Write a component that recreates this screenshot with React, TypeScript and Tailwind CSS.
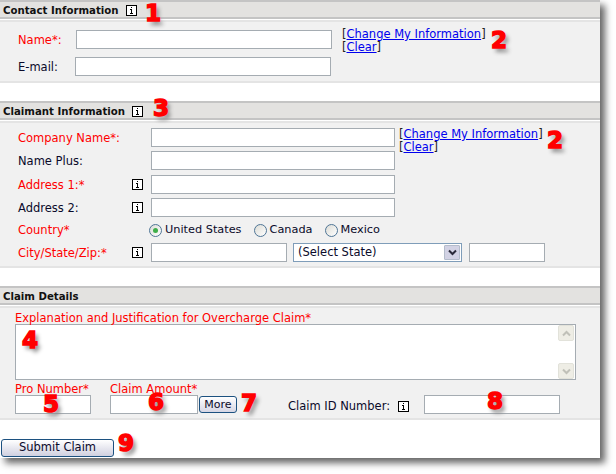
import type { ReactNode } from "react";

function InfoIcon({ className = "" }: { className?: string }) {
  return (
    <svg width="11" height="11" viewBox="0 0 11 11" className={`shrink-0 ${className}`}>
      <rect x="0.5" y="0.5" width="10" height="10" fill="#fff" stroke="#000" />
      <path d="M5 2h1v1H5zM4 4h2v4h1v1H4V8h1V5H4z" fill="#000" />
    </svg>
  );
}

function Marker({ n, className }: { n: string; className: string }) {
  return (
    <span
      className={`absolute font-['DejaVu_Sans'] text-[23px] leading-none font-bold text-[#f00] [-webkit-text-stroke:1.5px_#f00] [text-shadow:3px_4px_4px_#8a8a8a] ${className}`}
    >
      {n}
    </span>
  );
}

function SectionHeader({ children }: { children: ReactNode }) {
  return (
    <div className="flex h-[19px] items-center gap-[7px] border-y-2 border-[#c4c4c4] bg-[#e3e2e0] pt-[2px] pl-[3px] text-[10.2px] font-bold text-[#111]">
      {children}
    </div>
  );
}

function TextBox({ className = "" }: { className?: string }) {
  return <div className={`h-[19px] shrink-0 border border-[#a5acb2] bg-white ${className}`} />;
}

function ChangeLinks() {
  return (
    <div className="text-[11.5px] leading-[13px] text-[#222]">
      <div>
        [<a className="text-[#00e] underline">Change My Information</a>]
      </div>
      <div>
        [<a className="text-[#00e] underline">Clear</a>]
      </div>
    </div>
  );
}

function Radio({ label, checked = false }: { label: string; checked?: boolean }) {
  return (
    <div className="flex items-center gap-[3px]">
      <div className="flex h-[13px] w-[13px] items-center justify-center rounded-full border border-[#4f7596] bg-gradient-to-br from-[#dcdcd6] to-white">
        {checked && <div className="h-[5px] w-[5px] rounded-full bg-[#3fae49]" />}
      </div>
      <span>{label}</span>
    </div>
  );
}

function ClaimantRow({
  label,
  required = false,
  info = false,
  children,
  className = "",
}: {
  label: string;
  required?: boolean;
  info?: boolean;
  children?: ReactNode;
  className?: string;
}) {
  return (
    <div className={`flex items-center ${className}`}>
      <div className={`w-[132px] shrink-0 pt-[2px] pl-[18px] whitespace-nowrap ${required ? "text-[#f00]" : ""}`}>
        {label}
      </div>
      <div className="w-[19px] shrink-0">{info && <InfoIcon />}</div>
      {children}
    </div>
  );
}

function ScrollButton({ up = false }: { up?: boolean }) {
  return (
    <div className="flex h-[16px] w-[16px] items-center justify-center rounded-[2px] border border-[#e2e2da] bg-[#eeede5]">
      <svg width="9" height="7" viewBox="0 0 9 7">
        <path
          d={up ? "M1 5.5l3.5-3.5 3.5 3.5" : "M1 1.5l3.5 3.5 3.5-3.5"}
          fill="none"
          stroke="#c0c0b8"
          strokeWidth="2"
        />
      </svg>
    </div>
  );
}

export default function App() {
  return (
    <div className="relative h-[474px] w-[616px] overflow-hidden bg-white font-['DejaVu_Sans',sans-serif] text-[11.5px] text-[#0a0a2a]">
      <div className="h-[458px] w-[600px] bg-white shadow-[5px_5px_7px_#666]">
        <SectionHeader>
          <span>Contact Information</span>
          <InfoIcon />
        </SectionHeader>
        <div className="mt-[1px] flex h-[63px] border-y-2 border-[#e4e4e4] bg-[#f1f1f1]">
          <div className="pt-[8px]">
            <div className="flex items-center">
              <div className="w-[76px] pt-[2px] pl-[18px] text-[#f00]">Name*:</div>
              <TextBox className="w-[256px]" />
            </div>
            <div className="mt-[8px] flex items-center">
              <div className="w-[75px] pt-[2px] pl-[18px]">E-mail:</div>
              <TextBox className="w-[256px]" />
            </div>
          </div>
          <div className="pt-[6px] pl-[10px]">
            <ChangeLinks />
          </div>
        </div>

        <div className="mt-[18px]">
          <SectionHeader>
            <span>Claimant Information</span>
            <InfoIcon />
          </SectionHeader>
        </div>
        <div className="mt-[1px] h-[147px] border-y-2 border-[#e4e4e4] bg-[#f1f1f1] pt-[5px]">
          <ClaimantRow label="Company Name*:" required className="relative">
            <TextBox className="w-[244px]" />
            <div className="absolute top-[0px] left-[399px]">
              <ChangeLinks />
            </div>
          </ClaimantRow>
          <ClaimantRow label="Name Plus:" className="mt-[4px]">
            <TextBox className="w-[244px]" />
          </ClaimantRow>
          <ClaimantRow label="Address 1:*" required info className="mt-[4px]">
            <TextBox className="w-[244px]" />
          </ClaimantRow>
          <ClaimantRow label="Address 2:" info className="mt-[4px]">
            <TextBox className="w-[244px]" />
          </ClaimantRow>
          <ClaimantRow label="Country*" required className="mt-[2px] h-[22px]">
            <div className="-ml-[2px] flex gap-[12px] text-[11.3px]">
              <Radio label="United States" checked />
              <Radio label="Canada" />
              <Radio label="Mexico" />
            </div>
          </ClaimantRow>
          <ClaimantRow label="City/State/Zip:*" required info className="mt-[2px]">
            <TextBox className="w-[136px]" />
            <div className="ml-[6px] flex h-[19px] w-[169px] items-center justify-between border border-[#7f9db9] bg-white pr-[1px] pl-[4px]">
              <span>(Select State)</span>
              <div className="flex h-[15px] w-[16px] items-center justify-center rounded-[1px] border border-[#b4bccb] bg-[#d2d2e4]">
                <svg width="9" height="7" viewBox="0 0 9 7">
                  <path d="M1 1.5l3.5 3.5 3.5-3.5" fill="none" stroke="#2a2a3a" strokeWidth="2" />
                </svg>
              </div>
            </div>
            <TextBox className="ml-[7px] w-[76px]" />
          </ClaimantRow>
        </div>

        <div className="mt-[18px]">
          <SectionHeader>
            <span>Claim Details</span>
          </SectionHeader>
        </div>
        <div className="mt-[1px] h-[114px] border-y-2 border-[#e4e4e4] bg-[#f1f1f1] pt-[4px] pl-[15px]">
          <div className="leading-[12px] text-[#f00]">Explanation and Justification for Overcharge Claim*</div>
          <div className="flex h-[56px] w-[561px] justify-end border border-[#a5acb2] bg-white">
            <div className="flex w-[17px] flex-col justify-between">
              <ScrollButton up />
              <ScrollButton />
            </div>
          </div>
          <div className="mt-[3px] flex">
            <div className="w-[95px]">
              <div className="leading-[12px] text-[#f00]">Pro Number*</div>
              <TextBox className="w-[76px]" />
            </div>
            <div className="w-[88px]">
              <div className="leading-[12px] text-[#f00]">Claim Amount*</div>
              <TextBox className="w-[88px]" />
            </div>
            <button className="mt-[13px] ml-[1px] h-[17px] w-[38px] rounded-[3px] border border-[#1c5180] bg-gradient-to-b from-white to-[#d6d6e4] text-[11px] leading-none">
              More
            </button>
            <div className="mt-[14px] ml-[51px] flex h-[19px] items-center gap-[8px]">
              <span>Claim ID Number:</span>
              <InfoIcon />
            </div>
            <TextBox className="mt-[12px] ml-[15px] w-[136px]" />
          </div>
        </div>

        <button className="mt-[19px] ml-[1px] h-[18px] w-[113px] rounded-[3px] border border-[#1c5180] bg-gradient-to-b from-white to-[#d0d0e0] text-[11.5px] leading-none">
          Submit Claim
        </button>
      </div>

      <Marker n="1" className="top-[2px] left-[145px]" />
      <Marker n="2" className="top-[29px] left-[491px]" />
      <Marker n="3" className="top-[97px] left-[153px]" />
      <Marker n="2" className="top-[129px] left-[547px]" />
      <Marker n="4" className="top-[329px] left-[22px]" />
      <Marker n="5" className="top-[393px] left-[43px]" />
      <Marker n="6" className="top-[391px] left-[148px]" />
      <Marker n="7" className="top-[392px] left-[241px]" />
      <Marker n="8" className="top-[390px] left-[487px]" />
      <Marker n="9" className="top-[432px] left-[118px]" />
    </div>
  );
}
